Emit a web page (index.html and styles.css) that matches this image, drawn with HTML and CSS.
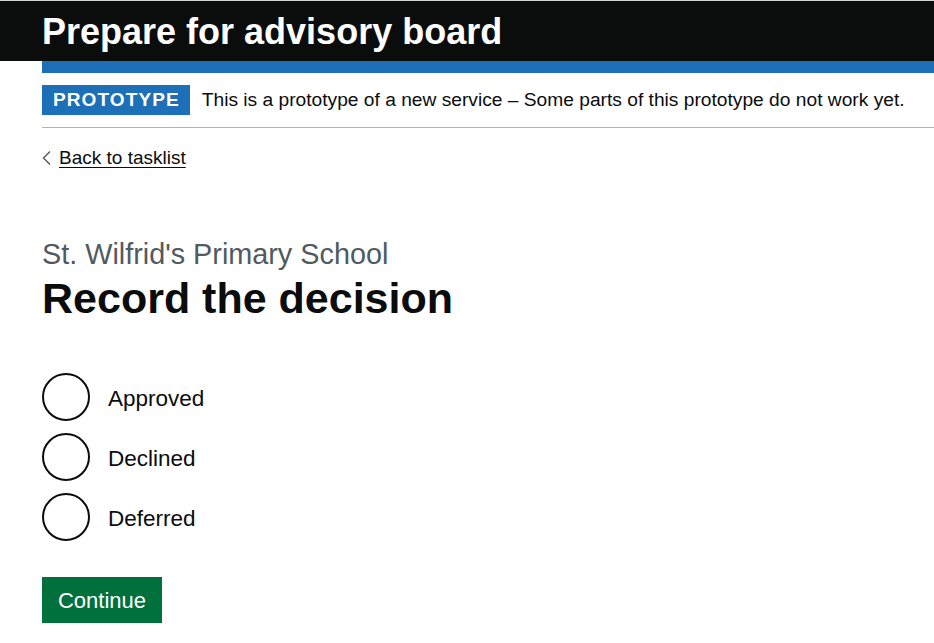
FILE: index.html
```html
<!DOCTYPE html>
<html lang="en">
<head>
<meta charset="utf-8">
<title>Record the decision</title>
<link rel="stylesheet" href="styles.css">
</head>
<body>
<header class="header">
  <div class="header-title">Prepare for advisory board</div>
</header>
<div class="page">
  <div class="header-rule"></div>
  <div class="banner">
    <strong class="tag">Prototype</strong>
    <span class="banner-text">This is a prototype of a new service – Some parts of this prototype do not work yet.</span>
  </div>
  <a class="back-link" href="#">
    <svg class="chevron" width="10" height="16" viewBox="0 0 10 16" aria-hidden="true"><polyline points="8,1.5 1.5,8 8,14.5" fill="none" stroke="#505a5f" stroke-width="1.4"/></svg>
    <span class="back-text">Back to tasklist</span>
  </a>
  <main class="main">
    <span class="caption">St. Wilfrid's Primary School</span>
    <h1 class="heading">Record the decision</h1>
    <div class="radios">
      <label class="radio"><span class="radio-circle"></span><span class="radio-label">Approved</span></label>
      <label class="radio"><span class="radio-circle"></span><span class="radio-label">Declined</span></label>
      <label class="radio"><span class="radio-circle"></span><span class="radio-label">Deferred</span></label>
    </div>
    <button class="button" type="button">Continue</button>
  </main>
</div>
</body>
</html>
```
FILE: styles.css
```css
html, body {
  margin: 0;
  padding: 0;
  background: #ffffff;
}
body {
  font-family: "Liberation Sans", Arial, sans-serif;
  color: #0b0c0c;
  border-top: 1px solid #d4d4d4;
}
.header {
  background: #0b0c0c;
  height: 60px;
  padding-left: 42px;
  box-sizing: border-box;
}
.header-title {
  color: #ffffff;
  font-weight: 700;
  font-size: 36px;
  line-height: 58px;
  padding-top: 2px;
  white-space: nowrap;
}
.page {
  margin-left: 42px;
}
.header-rule {
  height: 12px;
  background: #1d70b8;
}
.banner {
  display: flex;
  align-items: center;
  gap: 12px;
  padding-top: 12px;
  padding-bottom: 12px;
  border-bottom: 1px solid #b1b4b6;
  white-space: nowrap;
}
.tag {
  display: flex;
  align-items: center;
  height: 30px;
  padding: 0 10px 0 11px;
  background: #1d70b8;
  color: #ffffff;
  font-weight: 700;
  font-size: 19px;
  letter-spacing: 1.1px;
  text-transform: uppercase;
}
.banner-text {
  font-size: 19.2px;
  line-height: 30px;
}
.back-link {
  display: inline-flex;
  align-items: center;
  margin-top: 18px;
  color: #0b0c0c;
  text-decoration: none;
  font-size: 19px;
  line-height: 24px;
}
.chevron {
  margin-right: 7px;
  margin-top: -1px;
}
.back-text {
  text-decoration: underline;
  text-underline-offset: 3px;
  text-decoration-thickness: 1px;
}
.main {
  display: flex;
  flex-direction: column;
  align-items: flex-start;
  padding-top: 67px;
}
.caption {
  display: block;
  color: #505a5f;
  font-size: 28.8px;
  line-height: 34px;
}
.heading {
  margin: 4px 0 0 0;
  font-size: 43px;
  line-height: 47px;
  font-weight: 700;
}
.radios {
  display: flex;
  flex-direction: column;
  gap: 12px;
  margin-top: 51px;
}
.radio {
  display: flex;
  align-items: center;
  gap: 18px;
  height: 48px;
}
.radio-circle {
  width: 48px;
  height: 48px;
  box-sizing: border-box;
  border: 2px solid #0b0c0c;
  border-radius: 50%;
}
.radio-label {
  font-size: 22.5px;
  line-height: 28px;
  padding-top: 3px;
}
.button {
  margin-top: 36px;
  height: 46px;
  padding: 2px 15px 0 15px;
  width: 120px;
  border: 0;
  background: #00703c;
  color: #ffffff;
  font-family: "Liberation Sans", Arial, sans-serif;
  font-size: 22px;
  line-height: 44px;
  box-shadow: 0 3px 0 #002d18;
  cursor: pointer;
}
```
